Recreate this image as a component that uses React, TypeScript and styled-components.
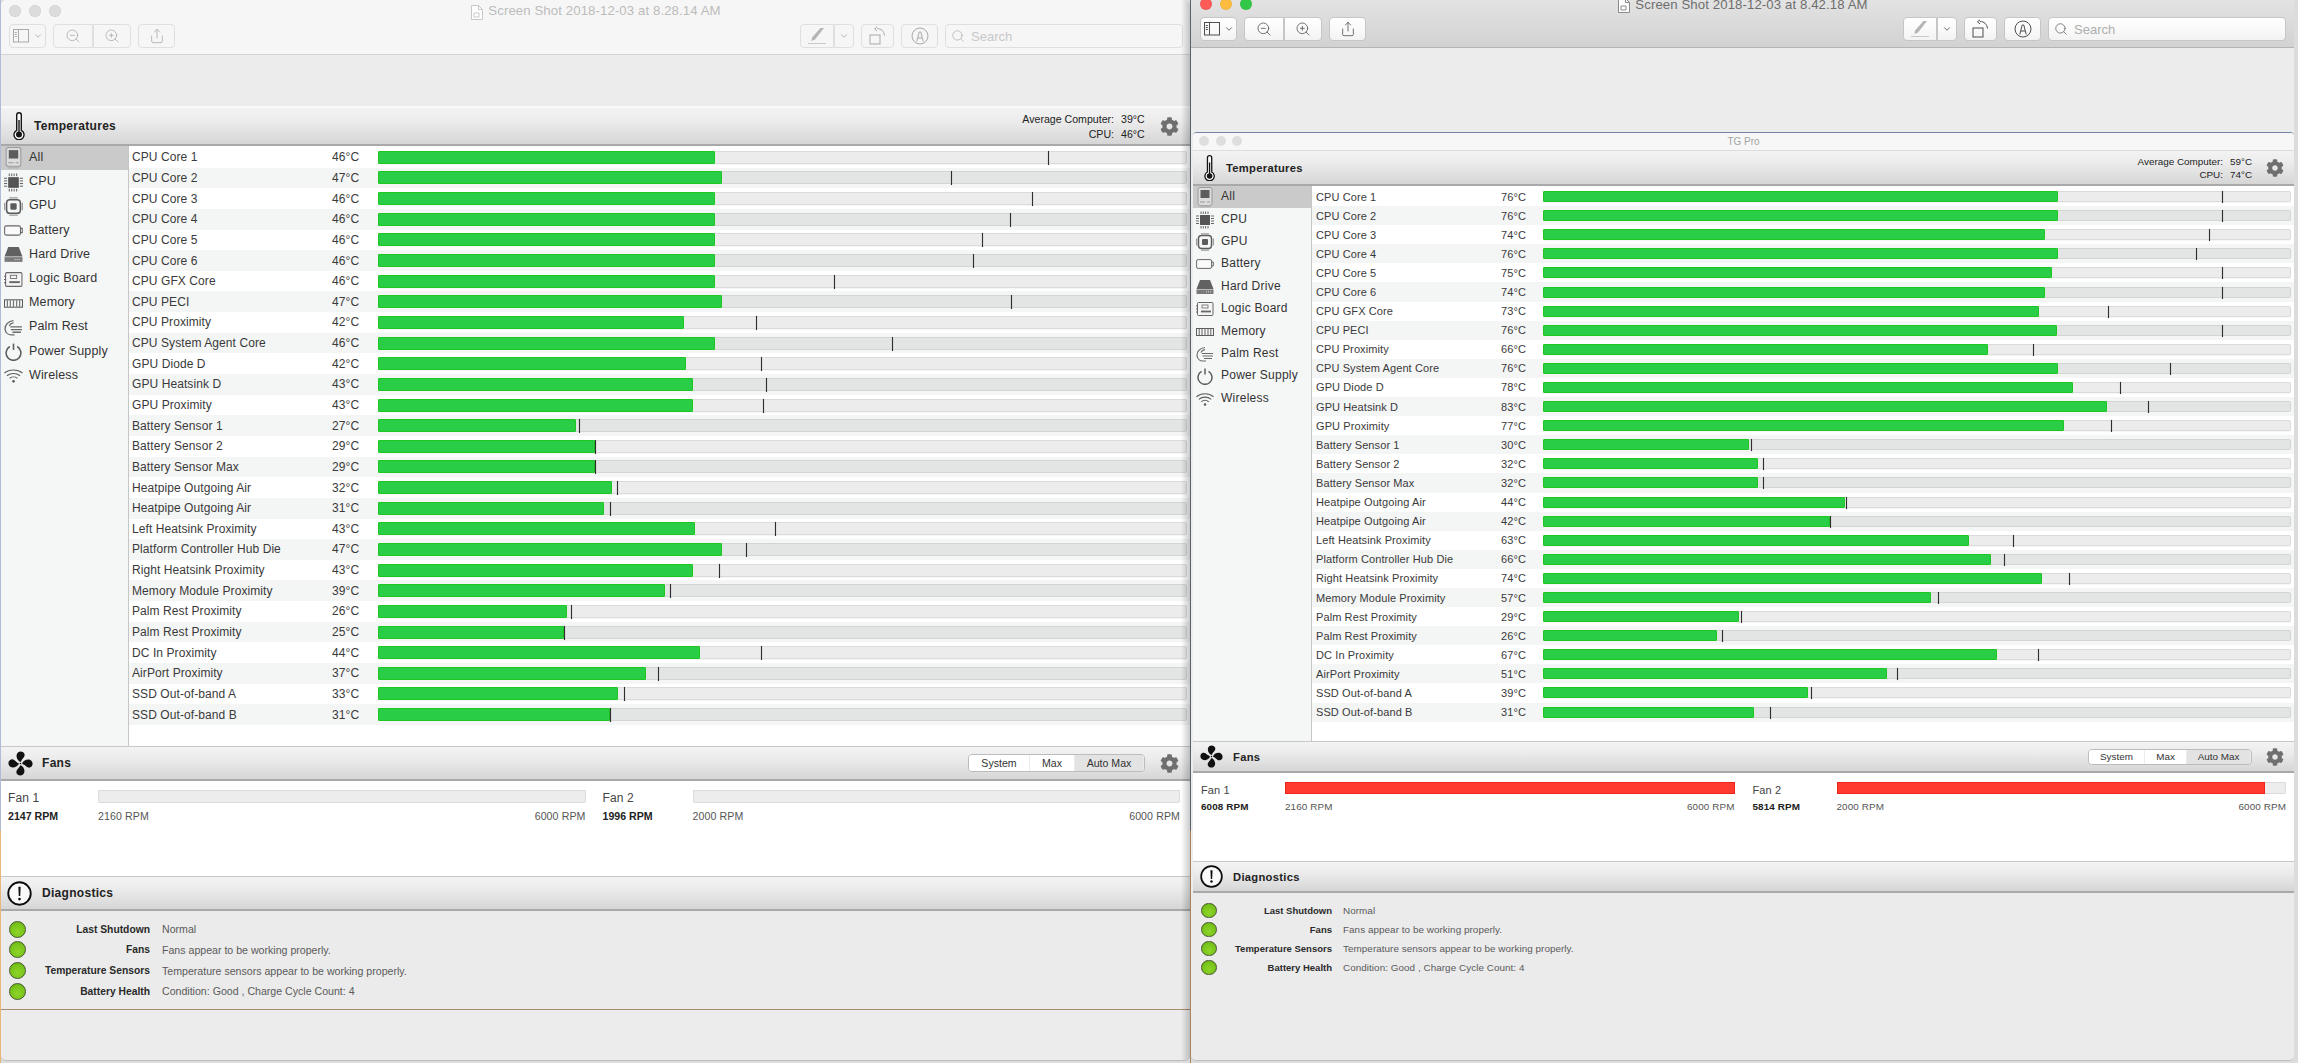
import React from "react";
import styled, { createGlobalStyle } from "styled-components";
import { ChevronDown, Search as SearchGlyph, ZoomIn, ZoomOut, Share } from "lucide-react";
import { FaCog } from "react-icons/fa";

type Size = "L" | "S";

const M = {
  L: { header: 38, fanHeader: 35, diagHeader: 35, row: 20.65, side: 24.2, sideW: 127, nameW: 200, tempW: 46, padL: 3, padR: 3, font: 12, ls: 0.08, sideFont: 12.5, sideLs: 0.14, small: 10.6, barH: 13, fanBody: 95, diagRow: 20.65, dot: 17, fanText: 90, fanPadL: 7, fanPadR: 10, fanGap: 17, trackH: 13, listH: 600, diagLabel: 10.3, diagLs: 0, valueLs: 0 },
  S: { header: 35, fanHeader: 32, diagHeader: 32, row: 19.1, side: 22.4, sideW: 118, nameW: 185, tempW: 42, padL: 4, padR: 3, font: 11, ls: 0.1, sideFont: 12, sideLs: 0.25, small: 9.9, barH: 11, fanBody: 88, diagRow: 19, dot: 15.5, fanText: 84, fanPadL: 8, fanPadR: 8, fanGap: 18, trackH: 12, listH: 555, diagLabel: 9.5, diagLs: 0, valueLs: 0.05 },
};

const FONT = `"Liberation Sans", Arial, sans-serif`;

const Global = createGlobalStyle`
  html, body { margin: 0; padding: 0; overflow: hidden; background: #e6e6e6; }
  * { box-sizing: border-box; }
  #root { width: 2298px; height: 1063px; }
`;

const Desktop = styled.div`
  width: 2298px;
  height: 1063px;
  display: flex;
  align-items: flex-start;
  overflow: hidden;
  font-family: ${FONT};
  color: #333;
  background:
    linear-gradient(to bottom, #aebdd4 0, #aebdd4 830px, #e9b777 831px, #e9b777 100%) left / 1px 100% no-repeat,
    linear-gradient(to bottom, #59616e 0, #59616e 830px, #a8845e 831px, #a8845e 100%) 1190px 0 / 1px 100% no-repeat,
    #dcdcdc;
`;

const PreviewWindow = styled.section<{ $active?: boolean }>`
  position: relative;
  flex: none;
  width: ${(p) => (p.$active ? 1103 : 1189)}px;
  height: ${(p) => (p.$active ? 1068 : 1061)}px;
  margin-left: 1px;
  margin-top: ${(p) => (p.$active ? -7 : 0)}px;
  background: #ececec;
  display: flex;
  flex-direction: column;
  border-radius: 5px;
  overflow: hidden;
  border-bottom: 1px solid #bdbdbd;
`;

const CastShadow = styled.div`
  position: absolute;
  top: 0;
  right: 0;
  bottom: 0;
  width: 9px;
  background: linear-gradient(to right, rgba(0, 0, 0, 0), rgba(0, 0, 0, .2));
`;

const TitleArea = styled.header<{ $active?: boolean }>`
  flex: none;
  height: 55px;
  padding: 0 ${(p) => (p.$active ? 8 : 7)}px 0 ${(p) => (p.$active ? 9 : 8)}px;
  display: flex;
  flex-direction: column;
  background: ${(p) => (p.$active ? "linear-gradient(#e5e5e5, #d2d2d2)" : "#f6f6f6")};
  border-bottom: 1px solid ${(p) => (p.$active ? "#b4b4b4" : "#d4d4d4")};
`;

const TitleRow = styled.div`
  height: 24px;
  position: relative;
  display: flex;
  align-items: center;
  justify-content: center;
  gap: 5px;
`;

const Lights = styled.div<{ $left: number }>`
  position: absolute;
  left: ${(p) => p.$left}px;
  top: 5px;
  display: flex;
  gap: 8px;
`;

const Light = styled.span<{ $c: string }>`
  width: 12px;
  height: 12px;
  border-radius: 50%;
  background: ${(p) => p.$c};
  box-shadow: inset 0 0 0 .5px rgba(0, 0, 0, .08);
`;

const TgLights = styled.div`
  position: absolute;
  left: 6px;
  top: 3px;
  display: flex;
  gap: 6.500px;
`;

const TgLight = styled.span`
  width: 10px;
  height: 10px;
  border-radius: 50%;
  background: #dedede;
`;

const DocTitle = styled.span<{ $active?: boolean }>`
  font-size: 13.2px;
  line-height: 10px;
  letter-spacing: .1px;
  margin-top: ${(p) => (p.$active ? 0 : -2)}px;
  color: ${(p) => (p.$active ? "#6e6e6e" : "#bcbcbc")};
`;

const Toolbar = styled.div`
  height: 24px;
  display: flex;
  justify-content: space-between;
`;

const ToolGroup = styled.div`
  display: flex;
  gap: 7px;
`;

const ToolButton = styled.div<{ $active?: boolean; $w: number }>`
  width: ${(p) => p.$w}px;
  height: 24px;
  display: flex;
  align-items: center;
  justify-content: center;
  gap: 4px;
  border-radius: 4px;
  background: ${(p) => (p.$active ? "linear-gradient(#ffffff, #f3f3f3)" : "#f6f6f6")};
  border: 1px solid ${(p) => (p.$active ? "#c6c6c6" : "#dfdfdf")};
  color: ${(p) => (p.$active ? "#4f4f4f" : "#a9a9a9")};
`;

const ToolSplit = styled.div`
  display: flex;
  & > div:first-child { border-radius: 4px 0 0 4px; border-right-width: 0.5px; }
  & > div:last-child { border-radius: 0 4px 4px 0; border-left-width: 0.5px; }
`;

const SearchField = styled(ToolButton)`
  justify-content: flex-start;
  padding-left: 5px;
  gap: 6px;
  font-size: 13px;
  color: ${(p) => (p.$active ? "#aeaeae" : "#c8c8c8")};
  & svg { color: ${(p) => (p.$active ? "#555" : "#a9a9a9")}; }
`;

const Canvas = styled.main<{ $active?: boolean }>`
  flex: 1;
  min-height: 0;
  display: flex;
  flex-direction: column;
  padding: ${(p) => (p.$active ? "84px 0 0 2px" : "51px 0 0 0")};
`;

const Panel = styled.div<{ $size: Size }>`
  display: flex;
  flex-direction: column;
  flex: ${(p) => (p.$size === "S" ? 1 : "none")};
  background: #fff;
  overflow: hidden;
  border-top: ${(p) => (p.$size === "S" ? "1px solid #6f84a3" : "2px solid #fafafa")};
  border-bottom: ${(p) => (p.$size === "S" ? "none" : "1px solid #a98a6d")};
  border-radius: ${(p) => (p.$size === "S" ? "4px 4px 6px 6px" : "0")};
`;

const PanelTitle = styled.div`
  height: 18px;
  flex: none;
  background: #f7f7f7;
  border-bottom: 1px solid #dcdcdc;
  position: relative;
  display: flex;
  align-items: center;
  justify-content: center;
  font-size: 10px;
  color: #a3a3a3;
`;

const SectionHeader = styled.div<{ $h: number; $top?: boolean }>`
  flex: none;
  height: ${(p) => p.$h}px;
  display: flex;
  align-items: center;
  background: linear-gradient(#f3f3f3 0%, #ececec 35%, #d6d6d6 100%);
  border-top: ${(p) => (p.$top ? "1px solid #c8c8c8" : "0")};
  border-bottom: 2px solid #a9a9a9;
`;

const HeaderIcon = styled.div<{ $x: number; $titleX: number }>`
  flex: none;
  width: ${(p) => p.$titleX}px;
  padding-left: ${(p) => p.$x}px;
  display: flex;
  align-items: center;
`;

const SectionTitle = styled.h2<{ $size: Size }>`
  margin: 0;
  font-size: ${(p) => (p.$size === "L" ? 12 : 11.2)}px;
  font-weight: 700;
  letter-spacing: .3px;
  color: #222;
`;

const HeaderRight = styled.div<{ $size: Size }>`
  margin-left: auto;
  display: flex;
  align-items: center;
  gap: ${(p) => (p.$size === "L" ? 15 : 14)}px;
  padding-right: ${(p) => (p.$size === "L" ? 11 : 10)}px;
`;

const InfoGrid = styled.div<{ $size: Size }>`
  display: grid;
  grid-template-columns: auto ${(p) => (p.$size === "L" ? 24 : 22)}px;
  column-gap: 7px;
  row-gap: ${(p) => (p.$size === "L" ? 3 : 2)}px;
  font-size: ${(p) => M[p.$size].small}px;
  color: #222;
  text-align: right;
  & span:nth-child(even) { text-align: left; white-space: nowrap; }
`;

const Segments = styled.div<{ $size: Size }>`
  display: flex;
  height: ${(p) => (p.$size === "L" ? 18 : 16)}px;
  border: 1px solid #bcbcbc;
  border-radius: 4px;
  overflow: hidden;
  font-size: ${(p) => M[p.$size].small}px;
  color: #333;
`;

const Segment = styled.span<{ $w: number; $off?: boolean }>`
  width: ${(p) => p.$w}px;
  display: flex;
  align-items: center;
  justify-content: center;
  background: ${(p) => (p.$off ? "#e3e3e3" : "#fff")};
  border-right: 1px solid #ececec;
`;

const Body = styled.div<{ $size: Size }>`
  flex: none;
  height: ${(p) => M[p.$size].listH}px;
  display: flex;
`;

const Sidebar = styled.nav<{ $size: Size }>`
  flex: none;
  width: ${(p) => M[p.$size].sideW + 1}px;
  background: #f5f6f6;
  border-right: 1px solid #c6c6c6;
`;

const SideItem = styled.div<{ $size: Size; $on?: boolean }>`
  height: ${(p) => M[p.$size].side}px;
  display: flex;
  align-items: center;
  gap: ${(p) => (p.$size === "L" ? 6 : 7)}px;
  padding: 0 0 2px 3px;
  font-size: ${(p) => M[p.$size].sideFont}px;
  letter-spacing: ${(p) => M[p.$size].sideLs}px;
  color: #333;
  background: ${(p) => (p.$on ? "#cacaca" : "transparent")};
  & svg { flex: none; color: #555; margin-top: 2px; }
`;

const List = styled.div`
  flex: 1;
  min-width: 0;
  background: #fff;
  padding-top: 1px;
`;

const Row = styled.div<{ $size: Size; $alt: boolean }>`
  height: ${(p) => M[p.$size].row}px;
  display: grid;
  grid-template-columns: ${(p) => M[p.$size].nameW}px ${(p) => M[p.$size].tempW}px 1fr;
  align-items: center;
  padding: 0 ${(p) => M[p.$size].padR}px 0 ${(p) => M[p.$size].padL}px;
  font-size: ${(p) => M[p.$size].font}px;
  letter-spacing: ${(p) => M[p.$size].ls}px;
  color: #3a3a3a;
  background: ${(p) => (p.$alt ? "#f4f5f5" : "#fff")};
`;

const Track = styled.div<{ $size: Size; $alt: boolean }>`
  position: relative;
  height: ${(p) => M[p.$size].barH}px;
  background: ${(p) => (p.$alt ? "#e3e5e5" : "#ececec")};
  box-shadow: inset 0 0 0 1px rgba(0, 0, 0, .07), 0 1px 0 #f6f6f6;
  border-radius: 2px;
`;

const Fill = styled.div`
  position: absolute;
  left: 0;
  top: 0;
  bottom: 0;
  background: #2ace46;
  border: 1px solid #1dc722;
  border-radius: 1px;
`;

const Tick = styled.div`
  position: absolute;
  top: 0;
  bottom: -1px;
  width: 1px;
  background: #2e2e2e;
  box-shadow: 0 0 1px rgba(0, 0, 0, .5);
`;

const FanBody = styled.div<{ $size: Size }>`
  flex: none;
  height: ${(p) => M[p.$size].fanBody}px;
  display: grid;
  grid-template-columns: 1fr 1fr;
  align-items: start;
  column-gap: ${(p) => M[p.$size].fanGap}px;
  padding: 9px ${(p) => M[p.$size].fanPadR}px 0 ${(p) => M[p.$size].fanPadL}px;
  background: #fff;
`;

const Fan = styled.div<{ $size: Size }>`
  display: grid;
  grid-template-columns: ${(p) => M[p.$size].fanText}px 1fr;
  grid-template-rows: ${(p) => M[p.$size].trackH}px auto;
  row-gap: 7px;
  align-items: center;
`;

const FanName = styled.span<{ $size: Size }>`
  font-size: ${(p) => M[p.$size].font}px;
  letter-spacing: .1px;
  margin-top: 3px;
  color: #444;
`;

const FanTrack = styled.div`
  position: relative;
  height: 100%;
  background: #ededed;
  box-shadow: inset 0 0 0 1px rgba(0, 0, 0, .07);
  border-radius: 0 0 2px 2px;
`;

const FanFill = styled.div`
  position: absolute;
  left: 0;
  top: 0;
  bottom: 0;
  background: #ff3b30;
  border: 1px solid #f0261d;
`;

const RpmNow = styled.span<{ $size: Size }>`
  font-size: ${(p) => M[p.$size].small}px;
  font-weight: 700;
  letter-spacing: ${(p) => (p.$size === "L" ? 0 : 0.1)}px;
  color: #222;
`;

const RpmRange = styled.div<{ $size: Size }>`
  display: flex;
  justify-content: space-between;
  font-size: ${(p) => M[p.$size].small}px;
  letter-spacing: .1px;
  color: #555;
`;

const DiagBody = styled.div<{ $size: Size }>`
  flex: ${(p) => (p.$size === "S" ? 1 : "none")};
  height: ${(p) => (p.$size === "L" ? "98px" : "auto")};
  background: #ebebeb;
  padding-top: 8px;
  padding-left: 8px;
`;

const DiagRow = styled.div<{ $size: Size }>`
  height: ${(p) => M[p.$size].diagRow}px;
  display: flex;
  align-items: center;
  font-size: ${(p) => M[p.$size].small}px;
`;

const Dot = styled.span<{ $size: Size }>`
  flex: none;
  width: ${(p) => M[p.$size].dot}px;
  height: ${(p) => M[p.$size].dot}px;
  border-radius: 50%;
  background: radial-gradient(circle at 50% 65%, #8fd42a 0%, #77c41a 60%, #62a814 100%);
  border: 1px solid #48562f;
`;

const DiagLabel = styled.span<{ $size: Size }>`
  width: ${(p) => (p.$size === "L" ? 124 : 115.500)}px;
  text-align: right;
  font-size: ${(p) => M[p.$size].diagLabel}px;
  font-weight: 700;
  letter-spacing: ${(p) => M[p.$size].diagLs}px;
  color: #2a2a2a;
`;

const DiagValue = styled.span<{ $size: Size }>`
  margin-left: ${(p) => (p.$size === "L" ? 12 : 11)}px;
  letter-spacing: ${(p) => M[p.$size].valueLs}px;
  color: #5a5a5a;
`;

/* ---------- drawings ---------- */

const Thermometer = ({ h }: { h: number }) => (
  <svg width={h * 0.43} height={h} viewBox="0 0 12 28">
    <path d="M3.700 3a2.300 2.300 0 0 1 4.600 0v15.300a5 5 0 1 1-4.600 0z" fill="#fbfbfb" stroke="#151515" strokeWidth="1.400" />
    <circle cx="6" cy="22.600" r="3" fill="#151515" />
    <rect x="5.300" y="8" width="1.400" height="13" fill="#151515" />
  </svg>
);

const FanIcon = ({ s }: { s: number }) => (
  <svg width={s} height={s} viewBox="0 0 24 24">
    {[0, 90, 180, 270].map((a) => (
      <path key={a} transform={`rotate(${a} 12 12)`} fill="#111" d="M11.300 10.200C8.600 8.600 6.800 4.200 9.600 1.400c2.200-1.900 5.600-.9 6.300 1.700.5 2.200-1.400 3.600-2.400 5-.5.7-.8 1.300-1 2.100z" />
    ))}
    <circle cx="12" cy="12" r=".8" fill="#111" />
  </svg>
);

const AlertIcon = ({ s }: { s: number }) => (
  <svg width={s} height={s} viewBox="0 0 24 24">
    <circle cx="12" cy="12" r="10.800" fill="#fafafa" stroke="#0c0c0c" strokeWidth="1.800" />
    <path d="M10.900 5.500h2.200l-.4 9h-1.400z" fill="#0c0c0c" />
    <circle cx="12" cy="17.300" r="1.300" fill="#0c0c0c" />
  </svg>
);

const GearIcon = ({ s }: { s: number }) => <FaCog size={s} color="#6f6f6f" />;

const Icons: Record<string, (s: number) => React.ReactNode> = {
  All: (s) => (
    <svg width={s} height={s + 3} viewBox="0 0 18 21">
      <rect x="2" y=".5" width="14" height="18" rx="2" fill="#dcdcdc" stroke="#9a9a9a" />
      <rect x="4.500" y="3" width="9" height="8" fill="#5c5c5c" />
      <path d="M4 15h5M11 15h3" stroke="#9a9a9a" />
      <rect x="3.500" y="18.500" width="11" height="2" fill="#b5b5b5" />
    </svg>
  ),
  CPU: (s) => (
    <svg width={s} height={s} viewBox="0 0 18 18" fill="none" stroke="#555">
      <rect x="4.500" y="4.500" width="9" height="9" fill="#555" />
      <path d="M5 .5v2.500M7.300 .5v2.500M9.600 .5v2.500M12 .5v2.500M5 15v2.500M7.300 15v2.500M9.600 15v2.500M12 15v2.500M0 5h3M0 7.500h3M0 10h3M0 12.500h3M15 5h3M15 7.500h3M15 10h3M15 12.500h3" strokeWidth=".9" />
    </svg>
  ),
  GPU: (s) => (
    <svg width={s} height={s} viewBox="0 0 18 18" fill="none" stroke="#5c5c5c">
      <rect x="2.500" y="2.500" width="13" height="13" rx="3" strokeWidth="1.400" />
      <rect x="6" y="6" width="6" height="6" rx="1" fill="#5c5c5c" stroke="none" />
      <path d="M5 .8h8M5 17.200h8M.7 5.500v7M17.300 5.500v7" strokeWidth="1.300" stroke="#999" />
    </svg>
  ),
  Battery: (s) => (
    <svg width={s} height={s} viewBox="0 0 18 18" fill="none" stroke="#666">
      <rect x=".6" y="4.600" width="15" height="8.800" rx="1.500" fill="#fafafa" strokeWidth="1" />
      <path d="M16 7h1.300v4H16" strokeWidth="1" />
    </svg>
  ),
  "Hard Drive": (s) => (
    <svg width={s} height={s} viewBox="0 0 18 18">
      <path d="M4 2h10l3.500 9H.5z" fill="#616161" />
      <path d="M.5 11.500h17V16H.5z" fill="#7a7a7a" />
      <path d="M10 13.800h6" stroke="#ddd" strokeDasharray="1 1" />
    </svg>
  ),
  "Logic Board": (s) => (
    <svg width={s} height={s} viewBox="0 0 18 18" fill="none" stroke="#666">
      <rect x="1.500" y="2.500" width="15.500" height="13" rx="1" fill="#f5f5f5" />
      <rect x="6" y="5" width="6" height="3" strokeWidth=".8" />
      <path d="M5 11.500h10" strokeWidth="1.800" />
      <path d="M0 6h2M0 9h2M0 12h2" />
    </svg>
  ),
  Memory: (s) => (
    <svg width={s} height={s} viewBox="0 0 18 18" fill="none" stroke="#5c5c5c">
      <rect x=".5" y="5.500" width="17" height="7" strokeWidth="1" />
      <path d="M3.200 6v6M6 6v6M9 6v6M12 6v6M14.800 6v6" strokeWidth="1.100" strokeOpacity=".85" />
    </svg>
  ),
  "Palm Rest": (s) => (
    <svg width={s} height={s} viewBox="0 0 18 18" fill="none" stroke="#6a6a6a" strokeWidth="1.200">
      <path d="M9 2.500C4 3 .8 6.500 1 10.500c.3 3.500 3 5.500 6 5.500h3" />
      <path d="M5 7.500C5.800 5.500 7 5 9 4.700M6 8.500h11M6.500 11h10.500M8 13.500h8" />
    </svg>
  ),
  "Power Supply": (s) => (
    <svg width={s} height={s} viewBox="0 0 18 18" fill="none" stroke="#5e5e5e" strokeWidth="1.500">
      <path d="M9 1.500v6" />
      <path d="M5.500 4.300a7 7 0 1 0 7 0" />
    </svg>
  ),
  Wireless: (s) => (
    <svg width={s} height={s} viewBox="0 0 18 18" fill="none" stroke="#5e5e5e" strokeWidth="1.100">
      <path d="M.4 6.800c4.800-4 12.400-4 17.200 0M2.800 9.300c3.500-2.900 8.900-2.900 12.400 0M5.300 11.700c2.100-1.700 5.300-1.700 7.400 0" />
      <circle cx="9" cy="14.500" r="1.300" fill="#5e5e5e" stroke="none" />
    </svg>
  ),
};

const ToolSidebar = () => (
  <svg width="16" height="14" viewBox="0 0 16 14" fill="none" stroke="currentColor">
    <rect x=".5" y=".5" width="15" height="12.500" />
    <path d="M5.500 1v12M1.800 3.500h2M1.800 5.500h2M1.800 7.500h2" />
  </svg>
);

const ToolPen = () => (
  <svg width="22" height="18" viewBox="0 0 22 18" fill="#b4b4b4">
    <path d="M14.500 1h3.500L9 12.500 5.500 14l.6-3.500z" />
    <path d="M2 16.500h18" stroke="#c9c9c9" fill="none" />
  </svg>
);

const ToolRotate = () => (
  <svg width="17" height="20" viewBox="0 0 17 20" fill="none" stroke="currentColor">
    <rect x="1" y="9" width="10" height="9" />
    <path d="M8 2.500c4 0 7 2.500 7.500 7M8 .8 5.500 2.800 8 5" />
  </svg>
);

const ToolMarkup = () => (
  <svg width="18" height="18" viewBox="0 0 18 18" fill="none" stroke="currentColor">
    <circle cx="9" cy="9" r="8" />
    <path d="M5.800 14.500 8.200 5h1.600l2.400 9.500M7 11h4" />
  </svg>
);

/* ---------- data ---------- */

const names = [
  "CPU Core 1", "CPU Core 2", "CPU Core 3", "CPU Core 4", "CPU Core 5", "CPU Core 6", "CPU GFX Core", "CPU PECI",
  "CPU Proximity", "CPU System Agent Core", "GPU Diode D", "GPU Heatsink D", "GPU Proximity", "Battery Sensor 1",
  "Battery Sensor 2", "Battery Sensor Max", "Heatpipe Outgoing Air", "Heatpipe Outgoing Air", "Left Heatsink Proximity",
  "Platform Controller Hub Die", "Right Heatsink Proximity", "Memory Module Proximity", "Palm Rest Proximity",
  "Palm Rest Proximity", "DC In Proximity", "AirPort Proximity", "SSD Out-of-band A", "SSD Out-of-band B",
];

const leftTemps = [46, 47, 46, 46, 46, 46, 46, 47, 42, 46, 42, 43, 43, 27, 29, 29, 32, 31, 43, 47, 43, 39, 26, 25, 44, 37, 33, 31];
const rightTemps = [76, 76, 74, 76, 75, 74, 73, 76, 66, 76, 78, 83, 77, 30, 32, 32, 44, 42, 63, 66, 74, 57, 29, 26, 67, 51, 39, 31];

// fill end and peak tick, as a share of the track width
const span = (a: number, s: number, e: number) => ((a - s) / (e - s)) * 100;
const leftBars = [
  [488, 715], [493, 649], [488, 704], [488, 689], [488, 670], [488, 664], [488, 569], [493, 690], [467, 516], [488, 609],
  [468, 519], [473, 523], [473, 521], [393, 395], [406, 406], [406, 406], [418, 421], [412, 416], [474, 529], [493, 509],
  [473, 491], [454, 457], [387, 390], [385, 385], [478, 519], [441, 449], [422, 426], [416, 416],
].map(([f, t]) => [span(f, 258, 810), span(t, 258, 810)]);
const rightBars = [
  [1405, 1517], [1405, 1517], [1396, 1508], [1405, 1499], [1401, 1517], [1396, 1517], [1392, 1439], [1404, 1517], [1357, 1388], [1405, 1481],
  [1415, 1447], [1438, 1466], [1409, 1441], [1194, 1195], [1200, 1203], [1200, 1203], [1259, 1260], [1249, 1249], [1344, 1374], [1359, 1368],
  [1394, 1412], [1318, 1323], [1187, 1188], [1172, 1175], [1363, 1391], [1288, 1295], [1234, 1236], [1197, 1208],
].map(([f, t]) => [span(f, 1053, 1564), span(t, 1053, 1564)]);

const categories = ["All", "CPU", "GPU", "Battery", "Hard Drive", "Logic Board", "Memory", "Palm Rest", "Power Supply", "Wireless"];

const diagnostics = [
  ["Last Shutdown", "Normal"],
  ["Fans", "Fans appear to be working properly."],
  ["Temperature Sensors", "Temperature sensors appear to be working properly."],
  ["Battery Health", "Condition: Good , Charge Cycle Count: 4"],
];

type FanData = { name: string; rpm: number; min: number; pct: number };

/* ---------- composition ---------- */

const PreviewChrome = ({ active, title }: { active?: boolean; title: string }) => (
  <TitleArea $active={active}>
    <TitleRow>
      <Lights $left={0}>
        <Light $c={active ? "#fc5b57" : "#dcdcdc"} />
        <Light $c={active ? "#fdbc40" : "#dcdcdc"} />
        <Light $c={active ? "#33c748" : "#dcdcdc"} />
      </Lights>
      <svg width="12" height="15" viewBox="0 0 12 15" fill="none" stroke={active ? "#8a8a8a" : "#c8c8c8"}>
        <path d="M.5.500h7l4 4v10H.5z" fill="#fff" />
        <path d="M7.500.500v4h4M3 8h5v4H3z" />
      </svg>
      <DocTitle $active={active}>{title}</DocTitle>
    </TitleRow>
    <Toolbar>
      <ToolGroup>
        <ToolButton $active={active} $w={37}>
          <ToolSidebar />
          <ChevronDown size={10} strokeWidth={2} />
        </ToolButton>
        <ToolSplit>
          <ToolButton $active={active} $w={40}><ZoomOut size={16} strokeWidth={1.2} /></ToolButton>
          <ToolButton $active={active} $w={38}><ZoomIn size={16} strokeWidth={1.2} /></ToolButton>
        </ToolSplit>
        <ToolButton $active={active} $w={37}><Share size={16} strokeWidth={1.2} /></ToolButton>
      </ToolGroup>
      <ToolGroup>
        <ToolSplit>
          <ToolButton $active={active} $w={34}><ToolPen /></ToolButton>
          <ToolButton $active={active} $w={20}><ChevronDown size={10} strokeWidth={2} /></ToolButton>
        </ToolSplit>
        <ToolButton $active={active} $w={33}><ToolRotate /></ToolButton>
        <ToolButton $active={active} $w={37}><ToolMarkup /></ToolButton>
        <SearchField $active={active} $w={238}>
          <SearchGlyph size={14} strokeWidth={1.2} />
          Search
        </SearchField>
      </ToolGroup>
    </Toolbar>
  </TitleArea>
);

const TGPanel = ({ size, temps, bars, avg, cpu, fans }: {
  size: Size; temps: number[]; bars: number[][]; avg: number; cpu: number; fans: FanData[];
}) => {
  const L = size === "L";
  return (
    <Panel $size={size}>
      {!L && (
        <PanelTitle>
          <TgLights>
            <TgLight />
            <TgLight />
            <TgLight />
          </TgLights>
          TG Pro
        </PanelTitle>
      )}
      <SectionHeader $h={M[size].header}>
        <HeaderIcon $x={L ? 12 : 11} $titleX={33}><Thermometer h={L ? 28 : 26} /></HeaderIcon>
        <SectionTitle $size={size}>Temperatures</SectionTitle>
        <HeaderRight $size={size}>
          <InfoGrid $size={size}>
            <span>Average Computer:</span><span>{avg}°C</span>
            <span>CPU:</span><span>{cpu}°C</span>
          </InfoGrid>
          <GearIcon s={L ? 19 : 18} />
        </HeaderRight>
      </SectionHeader>
      <Body $size={size}>
        <Sidebar $size={size}>
          {categories.map((c, i) => (
            <SideItem key={c} $size={size} $on={i === 0}>
              {Icons[c](L ? 19 : 18)}
              {c}
            </SideItem>
          ))}
        </Sidebar>
        <List>
          {names.map((n, i) => (
            <Row key={i} $size={size} $alt={i % 2 === 1}>
              <span>{n}</span>
              <span>{temps[i]}°C</span>
              <Track $size={size} $alt={i % 2 === 1}>
                <Fill style={{ width: `${bars[i][0]}%` }} />
                <Tick style={{ left: `${bars[i][1]}%` }} />
              </Track>
            </Row>
          ))}
        </List>
      </Body>
      <SectionHeader $h={M[size].fanHeader} $top>
        <HeaderIcon $x={7} $titleX={L ? 41 : 40}><FanIcon s={L ? 25 : 23} /></HeaderIcon>
        <SectionTitle $size={size}>Fans</SectionTitle>
        <HeaderRight $size={size}>
          <Segments $size={size}>
            <Segment $w={L ? 61 : 56}>System</Segment>
            <Segment $w={L ? 45 : 42}>Max</Segment>
            <Segment $w={L ? 69 : 64} $off>Auto Max</Segment>
          </Segments>
          <GearIcon s={L ? 19 : 18} />
        </HeaderRight>
      </SectionHeader>
      <FanBody $size={size}>
        {fans.map((f) => (
          <Fan key={f.name} $size={size}>
            <FanName $size={size}>{f.name}</FanName>
            <FanTrack>{f.pct > 0 && <FanFill style={{ width: `${f.pct}%` }} />}</FanTrack>
            <RpmNow $size={size}>{f.rpm} RPM</RpmNow>
            <RpmRange $size={size}><span>{f.min} RPM</span><span>6000 RPM</span></RpmRange>
          </Fan>
        ))}
      </FanBody>
      <SectionHeader $h={M[size].diagHeader} $top>
        <HeaderIcon $x={L ? 6 : 7} $titleX={L ? 41 : 40}><AlertIcon s={L ? 25 : 23} /></HeaderIcon>
        <SectionTitle $size={size}>Diagnostics</SectionTitle>
      </SectionHeader>
      <DiagBody $size={size}>
        {diagnostics.map(([a, b]) => (
          <DiagRow key={a} $size={size}>
            <Dot $size={size} />
            <DiagLabel $size={size}>{a}</DiagLabel>
            <DiagValue $size={size}>{b}</DiagValue>
          </DiagRow>
        ))}
      </DiagBody>
    </Panel>
  );
};

export default function App() {
  return (
    <Desktop>
      <Global />
      <PreviewWindow>
        <PreviewChrome title="Screen Shot 2018-12-03 at 8.28.14 AM" />
        <Canvas>
          <TGPanel size="L" temps={leftTemps} bars={leftBars} avg={39} cpu={46} fans={[
            { name: "Fan 1", rpm: 2147, min: 2160, pct: 0 },
            { name: "Fan 2", rpm: 1996, min: 2000, pct: 0 },
          ]} />
        </Canvas>
        <CastShadow />
      </PreviewWindow>
      <PreviewWindow $active>
        <PreviewChrome active title="Screen Shot 2018-12-03 at 8.42.18 AM" />
        <Canvas $active>
          <TGPanel size="S" temps={rightTemps} bars={rightBars} avg={59} cpu={74} fans={[
            { name: "Fan 1", rpm: 6008, min: 2160, pct: 100 },
            { name: "Fan 2", rpm: 5814, min: 2000, pct: 95.3 },
          ]} />
        </Canvas>
      </PreviewWindow>
    </Desktop>
  );
}
